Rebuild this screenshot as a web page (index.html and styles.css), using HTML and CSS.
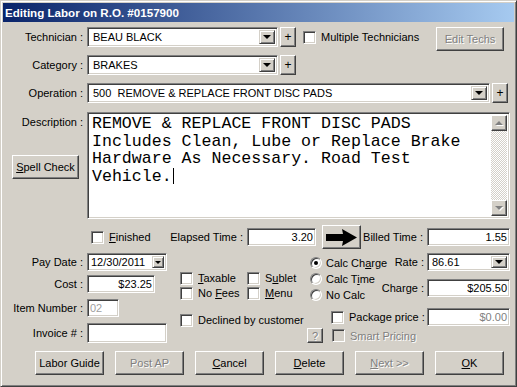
FILE: index.html
```html
<!DOCTYPE html>
<html>
    <head>
        <link rel="stylesheet" href="styles.css">
    </head>
    <body>
        <div class="window">
            <div class="titlebar">Editing Labor on R.O. #0157900</div>
            <div class="content">
                <div class="row">
                    <span class="lbl">Technician :</span>
                    <div class="field combo tech-combo"><span class="value">BEAU BLACK</span><span class="drop"><i class="tri"></i></span></div>
                    <span class="btn plus">+</span>
                    <span class="check multi"><span class="box"></span>Multiple Technicians</span>
                    <span class="btn disabled edit-techs">Edit Techs</span>
                </div>
                <div class="row row-gap">
                    <span class="lbl">Category :</span>
                    <div class="field combo tech-combo"><span class="value">BRAKES</span><span class="drop"><i class="tri"></i></span></div>
                    <span class="btn plus">+</span>
                </div>
                <div class="row row-gap">
                    <span class="lbl">Operation :</span>
                    <div class="field combo op-combo"><span class="value">500&nbsp; REMOVE &amp; REPLACE FRONT DISC PADS</span><span class="drop"><i class="tri"></i></span></div>
                    <span class="btn plus op-plus">+</span>
                </div>

                <div class="desc-row">
                    <div class="desc-side">
                        <div class="lbl">Description :</div>
                        <span class="btn spell"><u>S</u>pell Check</span>
                    </div>
                    <div class="field memo">
                        <div class="memo-text">REMOVE &amp; REPLACE FRONT DISC PADS
Includes Clean, Lube or Replace Brake
Hardware As Necessary. Road Test
Vehicle.<span class="caret"></span></div>
                        <div class="scrollbar">
                            <span class="btn sb-btn"><i class="sb-up"></i></span>
                            <span class="sb-track"></span>
                            <span class="btn sb-btn"><i class="sb-down"></i></span>
                        </div>
                    </div>
                </div>

                <div class="time-row">
                    <span class="check finished"><span class="box"></span><span><u>F</u>inished</span></span>
                    <span class="lbl elapsed-lbl">Elapsed Time :</span>
                    <div class="field num elapsed">3.20</div>
                    <span class="btn arrow-btn">
                        <svg width="31" height="17" viewBox="0 0 31 17"><polygon points="0,5 17,5 16,0 31,8.5 16,17 17,12 0,12" fill="#000"/></svg>
                    </span>
                    <span class="lbl billed-lbl">Billed Time :</span>
                    <div class="field num billed">1.55</div>
                </div>

                <div class="lower">
                    <div class="left-col">
                        <div class="lrow">
                            <span class="lbl">Pay Date :</span>
                            <div class="field date"><span class="value">12/30/2011</span><span class="drop small"><i class="tri"></i></span></div>
                        </div>
                        <div class="lrow cost-row">
                            <span class="lbl">Cost :</span>
                            <div class="field num cost">$23.25</div>
                        </div>
                        <div class="lrow item-row">
                            <span class="lbl">Item Number :</span>
                            <div class="field item">02</div>
                        </div>
                        <div class="lrow invoice-row">
                            <span class="lbl">Invoice # :</span>
                            <div class="field invoice"></div>
                        </div>
                    </div>

                    <div class="mid-col">
                        <div class="mrow first">
                            <span class="check mitem"><span class="box"></span><span><u>T</u>axable</span></span>
                            <span class="check"><span class="box"></span><span>S<u>u</u>blet</span></span>
                        </div>
                        <div class="mrow second">
                            <span class="check mitem"><span class="box"></span><span>No <u>F</u>ees</span></span>
                            <span class="check"><span class="box"></span><span><u>M</u>enu</span></span>
                        </div>
                        <div class="mrow third">
                            <span class="check"><span class="box"></span>Declined by customer</span>
                        </div>
                    </div>

                    <div class="right-col">
                        <div class="rtop">
                            <div class="radios">
                                <div class="radio-row"><span class="radio on"></span><span>Calc Ch<u>a</u>rge</span></div>
                                <div class="radio-row"><span class="radio"></span><span>Calc T<u>i</u>me</span></div>
                                <div class="radio-row"><span class="radio"></span><span>No Calc</span></div>
                            </div>
                            <div class="rate-col">
                                <div class="rrow">
                                    <span class="rlbl">Rate :</span>
                                    <div class="field combo rate"><span class="value">86.61</span><span class="drop"><i class="tri"></i></span></div>
                                </div>
                                <div class="rrow charge-row">
                                    <span class="rlbl">Charge :</span>
                                    <div class="field num money">$205.50</div>
                                </div>
                            </div>
                        </div>
                        <div class="pkg-row">
                            <span class="check pkg"><span class="box"></span>Package price :</span>
                            <div class="field num money grey-text">$0.00</div>
                        </div>
                        <div class="smart-row">
                            <span class="btn disabled help">?</span>
                            <span class="check smart disabled-text"><span class="box off"></span>Smart Pricing</span>
                        </div>
                    </div>
                </div>

                <div class="buttons">
                    <span class="btn big">Labor Guide</span>
                    <span class="btn big disabled">Post AP</span>
                    <span class="btn big"><u>C</u>ancel</span>
                    <span class="btn big"><u>D</u>elete</span>
                    <span class="btn big disabled"><u>N</u>ext &gt;&gt;</span>
                    <span class="btn big"><u>O</u>K</span>
                </div>
            </div>
        </div>
    </body>
</html>
```
FILE: styles.css
```css
body {
    margin: 0;
    background-color: #d4d0c8;
    font-family: "Liberation Sans", Arial, sans-serif;
    font-size: 11px;
    color: #000;
}
.window {
    width: 517px;
    height: 387px;
    box-sizing: border-box;
    padding: 2px;
    background-color: #d4d0c8;
    border: 1px solid;
    border-color: #d4d0c8 #404040 #404040 #d4d0c8;
    box-shadow: inset 1px 1px #fff, inset -1px -1px #808080;
}
.titlebar {
    height: 19px;
    line-height: 19px;
    padding-left: 2px;
    background: linear-gradient(to right, #0a246a, #a6caf0);
    color: white;
    font-weight: bold;
    font-size: 11.6px;
}
.content {
    padding: 5px 4px 0 0;
}

/* 3d pieces */
.field {
    box-sizing: border-box;
    background-color: white;
    border: 1px solid;
    border-color: #808080 #fff #fff #808080;
    box-shadow: inset 1px 1px #404040, inset -1px -1px #d4d0c8;
}
.btn {
    box-sizing: border-box;
    display: flex;
    align-items: center;
    justify-content: center;
    background-color: #d4d0c8;
    border: 1px solid;
    border-color: #fff #404040 #404040 #fff;
    box-shadow: inset -1px -1px #808080;
    flex: none;
    white-space: nowrap;
}
.disabled, .disabled-text {
    color: #808080;
    text-shadow: 1px 1px #fff;
}
.grey-text {
    color: #808080;
}

.row {
    display: flex;
    align-items: center;
    height: 20px;
}
.row-gap {
    margin-top: 8px;
}
.lbl {
    flex: none;
    width: 80px;
    margin-right: 4px;
    text-align: right;
    white-space: nowrap;
}
.combo {
    display: flex;
    align-items: center;
    height: 20px;
    padding: 2px;
}
.combo .value, .date .value {
    flex: 1;
    padding-left: 3px;
    white-space: nowrap;
    overflow: hidden;
}
.drop {
    box-sizing: border-box;
    width: 16px;
    align-self: stretch;
    display: flex;
    align-items: center;
    justify-content: center;
    background-color: #d4d0c8;
    border: 1px solid;
    border-color: #d4d0c8 #404040 #404040 #d4d0c8;
    box-shadow: inset 1px 1px #fff, inset -1px -1px #808080;
}
.drop.small {
    width: 12px;
}
.tri {
    width: 0;
    height: 0;
    border-left: 4px solid transparent;
    border-right: 4px solid transparent;
    border-top: 4px solid #000;
}
.drop.small .tri {
    border-left-width: 3px;
    border-right-width: 3px;
    border-top-width: 3px;
}
.tech-combo {
    width: 191px;
}
.op-combo {
    flex: 1;
}
.plus {
    width: 16px;
    height: 20px;
    margin-left: 2px;
    font-size: 12px;
}
.op-plus {
    margin-right: 2px;
}
.check {
    display: flex;
    align-items: center;
    white-space: nowrap;
}
.box {
    box-sizing: border-box;
    width: 13px;
    height: 13px;
    margin-right: 5px;
    flex: none;
    background-color: white;
    border: 1px solid;
    border-color: #808080 #fff #fff #808080;
    box-shadow: inset 1px 1px #404040, inset -1px -1px #d4d0c8;
}
.box.off {
    background-color: #d4d0c8;
}
.multi {
    margin-left: 7px;
}
.edit-techs {
    margin-left: auto;
    margin-right: 6px;
    width: 68px;
    height: 24px;
    align-self: flex-start;
}

/* description */
.desc-row {
    display: flex;
    align-items: flex-start;
    height: 107px;
    margin-top: 9px;
}
.desc-side {
    flex: none;
    width: 80px;
    margin-right: 4px;
}
.desc-side .lbl {
    margin-right: 0;
    line-height: 20px;
}
.spell {
    width: 67px;
    height: 24px;
    margin: 23px 0 0 9px;
}
.memo {
    flex: 1;
    height: 107px;
    display: flex;
    padding: 2px;
}
.memo-text {
    flex: 1;
    padding-left: 2px;
    font-family: "Liberation Mono", "Courier New", monospace;
    font-size: 16.6px;
    line-height: 17.7px;
    white-space: pre;
    overflow: hidden;
}
.caret {
    display: inline-block;
    width: 1px;
    height: 16px;
    margin-left: 1px;
    background-color: black;
    vertical-align: -3px;
}
.scrollbar {
    width: 16px;
    display: flex;
    flex-direction: column;
}
.sb-btn {
    height: 16px;
}
.sb-track {
    flex: 1;
    background: repeating-conic-gradient(#d4d0c8 0 25%, #fff 0 50%) 0 0 / 2px 2px;
}
.sb-up, .sb-down {
    width: 0;
    height: 0;
    border-left: 4px solid transparent;
    border-right: 4px solid transparent;
    filter: drop-shadow(1px 1px #fff);
}
.sb-up {
    border-bottom: 4px solid #808080;
}
.sb-down {
    border-top: 4px solid #808080;
}

/* time row */
.time-row {
    display: flex;
    align-items: center;
    height: 24px;
    margin-top: 6px;
}
.finished {
    width: 79px;
    margin-left: 88px;
}
.elapsed-lbl {
    width: 73px;
}
.num {
    height: 18px;
    line-height: 16px;
    text-align: right;
    padding-right: 2px;
    white-space: nowrap;
}
.elapsed {
    width: 69px;
}
.arrow-btn {
    width: 39px;
    height: 24px;
    margin-left: 6px;
}
.billed-lbl {
    width: 62px;
}
.billed {
    width: 83px;
}

/* lower part */
.lower {
    display: flex;
    align-items: flex-start;
    height: 98px;
    margin-top: 4px;
}
.left-col {
    flex: none;
    width: 164px;
}
.lrow {
    display: flex;
    align-items: center;
    height: 18px;
}
.cost-row {
    margin-top: 4px;
}
.item-row, .invoice-row {
    margin-top: 6px;
}
.invoice-row {
    height: 20px;
}
.date {
    width: 80px;
    height: 18px;
    display: flex;
    align-items: center;
    padding: 2px;
}
.date .value {
    padding-left: 1px;
}
.cost {
    width: 68px;
}
.item {
    width: 32px;
    height: 18px;
    line-height: 16px;
    padding-left: 2px;
    color: #a0a0a0;
}
.invoice {
    width: 80px;
    height: 20px;
}

.mid-col {
    flex: none;
    width: 127px;
    margin-left: 13px;
}
.mrow {
    display: flex;
    align-items: center;
    height: 14px;
}
.mrow.first {
    margin-top: 18px;
}
.mrow.second {
    margin-top: 1px;
}
.mrow.third {
    margin-top: 13px;
}
.mitem {
    width: 67px;
}

.right-col {
    flex: 1;
    min-width: 0;
}
.rtop {
    display: flex;
    height: 55px;
}
.radios {
    flex: none;
    width: 85px;
    margin-left: 3px;
    padding-top: 2px;
}
.radio-row {
    display: flex;
    align-items: center;
    height: 16px;
    white-space: nowrap;
}
.radio {
    box-sizing: border-box;
    position: relative;
    width: 12px;
    height: 12px;
    margin-right: 4px;
    border-radius: 50%;
    background-color: white;
    border: 1px solid;
    border-color: #808080 #fff #fff #808080;
    box-shadow: inset 1px 1px #404040, inset -1px -1px #d4d0c8;
}
.radio.on::after {
    content: "";
    position: absolute;
    left: 3px;
    top: 3px;
    width: 4px;
    height: 4px;
    border-radius: 50%;
    background-color: black;
}
.rate-col {
    flex: 1;
    min-width: 0;
}
.rrow {
    display: flex;
    align-items: center;
    justify-content: flex-end;
    height: 18px;
}
.charge-row {
    margin-top: 8px;
}
.rlbl {
    margin-right: 3px;
    white-space: nowrap;
}
.rate {
    flex: none;
    width: 83px;
    height: 18px;
    padding: 1px 2px 1px 1px;
}
.rate .drop {
    margin: 1px 0;
}
.money {
    flex: none;
    width: 83px;
}
.pkg-row {
    display: flex;
    align-items: center;
    height: 18px;
}
.pkg {
    margin-left: 24px;
    margin-right: auto;
}
.smart-row {
    display: flex;
    align-items: center;
    height: 15px;
    margin-top: 2px;
}
.help {
    width: 16px;
    height: 15px;
    font-size: 11px;
}
.smart {
    margin-left: 9px;
}

.buttons {
    display: flex;
    gap: 11px;
    margin-left: 32px;
}
.big {
    width: 69px;
    height: 24px;
}
```
